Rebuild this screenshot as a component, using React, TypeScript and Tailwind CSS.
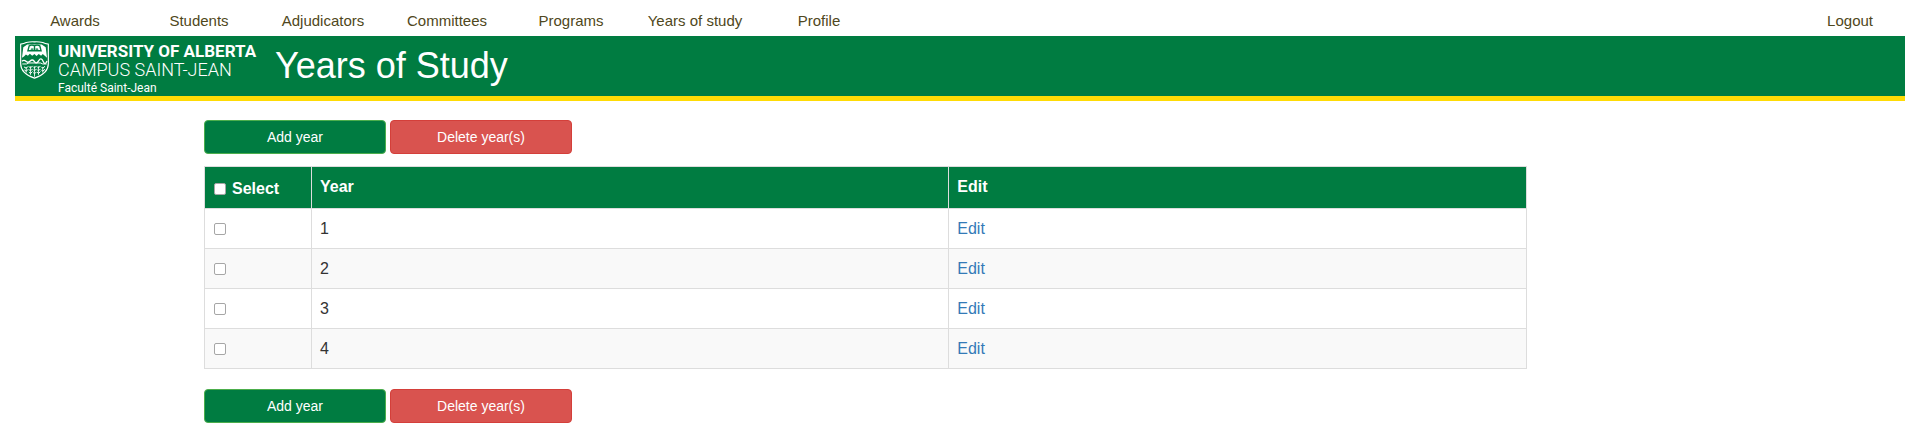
import { useState } from "react";

const NAV_ITEMS = ["Awards", "Students", "Adjudicators", "Committees", "Programs", "Years of study", "Profile"];
const YEARS = [1, 2, 3, 4];

const checkboxClass =
  "block size-3 shrink-0 appearance-none rounded-[2px] border border-[#a6a6a6] bg-white checked:bg-[#337ab7]";

function Shield() {
  return (
    <svg viewBox="0 0 88 114" className="h-[38px] w-[29px] shrink-0" aria-hidden="true">
      <path
        d="M2 9 Q12 8 19 4 Q32 1 44 2 Q56 1 69 4 Q76 8 86 9 V68 Q86 97 44 112 Q2 97 2 68 Z"
        fill="none"
        stroke="#fff"
        strokeWidth="3.5"
      />
      <path
        d="M10 18 L22 10 H66 L78 18 L82 50 L76 45 L69 39 L64 44 L57 39 L50 45 L44 39 L37 44 L30 38 L24 44 L18 40 L12 46 L6 50 Z"
        fill="#fff"
      />
      <path
        d="M24 29 L28 14 Q36 10 44 14 Q52 10 60 14 L64 29 Z M44 14 V29"
        fill="#fff"
        stroke="#007c41"
        strokeWidth="4"
      />
      <path d="M34 22 H41 V26 H32 Z M47 22 H54 L56 26 H47 Z" fill="#007c41" />
      <path
        d="M6 61 Q12 55 18 61 T31 60 T44 62 T57 59 T70 61 T82 60"
        fill="none"
        stroke="#fff"
        strokeWidth="4"
      />
      <path d="M7 69 H20 L27 66 H62 L69 69 H81" fill="none" stroke="#fff" strokeWidth="3" />
      <path
        d="M19 78 V95 M32 76 V102 M44 76 V108 M56 76 V102 M69 78 V95"
        fill="none"
        stroke="#fff"
        strokeWidth="2.5"
      />
      <path
        d="M12 78 L19 82 L25 76 M13 87 L19 91 L25 85 M27 77 L32 81 L38 75 M27 86 L32 90 L38 84 M27 94 L32 98 L38 92 M40 77 L44 81 L50 75 M40 86 L44 90 L50 84 M40 95 L44 99 L50 93 M52 77 L56 81 L62 75 M52 86 L56 90 L62 84 M52 94 L56 98 L62 92 M65 78 L69 82 L76 76 M65 87 L69 91 L76 85"
        fill="none"
        stroke="#fff"
        strokeWidth="3"
      />
    </svg>
  );
}

function Actions() {
  return (
    <div className="flex gap-1">
      <button type="button" className="h-[34px] w-[182px] rounded-[4px] border border-[#4cae4c] bg-[#007c41] text-sm text-white">
        Add year
      </button>
      <button type="button" className="h-[34px] w-[182px] rounded-[4px] border border-[#d43f3a] bg-[#d9534f] text-sm text-white">
        Delete year(s)
      </button>
    </div>
  );
}

export default function App() {
  const [selected, setSelected] = useState<number[]>([]);
  const toggle = (year: number) =>
    setSelected((s) => (s.includes(year) ? s.filter((y) => y !== year) : [...s, year]));

  return (
    <div className="bg-white px-[15px] pb-3 font-['Liberation_Sans',Arial,sans-serif] text-base text-[#333333]">
      <nav className="flex h-9 items-center justify-between pt-[6px] text-[15px] leading-5 text-[#4f4720]">
        <ul className="-ml-[2px] flex">
          {NAV_ITEMS.map((item) => (
            <li key={item} className="w-[124px] text-center">
              <a href="#">{item}</a>
            </li>
          ))}
        </ul>
        <a href="#" className="mr-8">
          Logout
        </a>
      </nav>

      <header className="flex h-[65px] border-b-[5px] border-[#ffdb05] bg-[#007c41] pl-[5px] text-white">
        <div className="flex w-[255px] gap-[9px] pt-[5px] font-[Roboto,sans-serif]">
          <Shield />
          <div className="whitespace-nowrap">
            <div className="text-[17px] leading-5 font-bold">UNIVERSITY OF ALBERTA</div>
            <div className="text-[18px] leading-[18px] font-light">CAMPUS SAINT-JEAN</div>
            <div className="text-xs leading-[18px]">Faculté Saint-Jean</div>
          </div>
        </div>
        <h1 className="text-4xl leading-[60px]">Years of Study</h1>
      </header>

      <main className="ml-[10%] w-[70%] pt-[19px]">
        <Actions />
        <table className="mt-3 mb-5 w-full table-fixed border-collapse border border-[#dddddd] text-left leading-[23px]">
          <colgroup>
            <col className="w-[107px]" />
            <col />
            <col className="w-[43.7%]" />
          </colgroup>
          <thead>
            <tr className="h-[42px] bg-[#007c41] align-top text-white">
              <th className="border border-[#dddddd] py-2 pr-2 pl-[9px]">
                <label className="flex items-center gap-[6px] pt-[2px]">
                  <input
                    type="checkbox"
                    className={checkboxClass}
                    checked={selected.length === YEARS.length}
                    onChange={(e) => setSelected(e.target.checked ? YEARS : [])}
                  />
                  Select
                </label>
              </th>
              <th className="border border-[#dddddd] p-2">Year</th>
              <th className="border border-[#dddddd] p-2">Edit</th>
            </tr>
          </thead>
          <tbody>
            {YEARS.map((year) => (
              <tr key={year} className="even:bg-[#f9f9f9]">
                <td className="border border-[#dddddd] py-2 pr-2 pl-[9px]">
                  <input
                    type="checkbox"
                    aria-label={`Select year ${year}`}
                    className={checkboxClass}
                    checked={selected.includes(year)}
                    onChange={() => toggle(year)}
                  />
                </td>
                <td className="border border-[#dddddd] p-2">{year}</td>
                <td className="border border-[#dddddd] p-2">
                  <a href="#" className="text-[#337ab7]">
                    Edit
                  </a>
                </td>
              </tr>
            ))}
          </tbody>
        </table>
        <Actions />
      </main>
    </div>
  );
}
